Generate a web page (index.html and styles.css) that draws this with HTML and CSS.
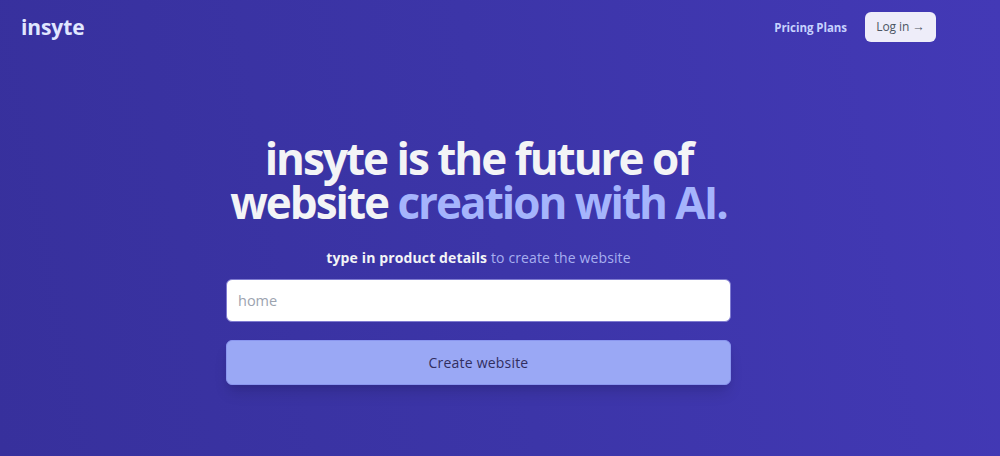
FILE: index.html
```html
<!DOCTYPE html>
<html lang="en">
<head>
<meta charset="utf-8">
<title>insyte</title>
<link rel="stylesheet" href="styles.css">
</head>
<body>
<div class="page">
  <header class="nav">
    <a class="logo" href="#">insyte</a>
    <div class="nav-right">
      <a class="nav-link" href="#">Pricing Plans</a>
      <a class="login" href="#">Log in <span class="arrow">→</span></a>
    </div>
  </header>
  <main class="hero">
    <h1 class="title">insyte is the future of<br>website <span class="accent">creation with AI.</span></h1>
    <p class="sub"><strong>type in product details</strong> to create the website</p>
    <form class="form">
      <input class="field" type="text" placeholder="home">
      <button class="cta" type="button">Create website</button>
    </form>
  </main>
</div>
</body>
</html>
```

FILE: styles.css
```css
* { box-sizing: border-box; }
html, body { margin: 0; height: 100%; }
body {
  font-family: "Open Sans", "Noto Sans", sans-serif;
  background: #3c35a8;
}
.page {
  height: 456px;
  overflow: hidden;
  background: linear-gradient(80deg, #37309c 0%, #3c35a8 50%, #4339b6 100%);
  display: flex;
  flex-direction: column;
}
.nav {
  display: flex;
  justify-content: space-between;
  align-items: center;
  padding: 12px 64px 0 21px;
  height: 42px;
}
.logo {
  color: #e0e7ff;
  font-size: 21px;
  font-weight: 700;
  letter-spacing: -0.1px;
  text-decoration: none;
  line-height: 30px;
}
.nav-right { display: flex; align-items: center; gap: 18px; }
.nav-link {
  color: #c7d2fe;
  font-size: 11.5px;
  font-weight: 700;
  letter-spacing: -0.05px;
  text-decoration: none;
}
.login {
  display: block;
  width: 71px;
  height: 30px;
  line-height: 30px;
  text-align: center;
  background: #eeedf9;
  border-radius: 6px;
  color: #4b5563;
  font-size: 12px;
  letter-spacing: -0.1px;
  text-decoration: none;
}
.arrow {
  font-family: "Liberation Sans", sans-serif;
  font-size: 12.5px;
}
.hero {
  display: flex;
  flex-direction: column;
  align-items: center;
  padding: 94px 43px 0 0;
}
.title {
  margin: 0;
  color: #f3f4f6;
  font-size: 44px;
  line-height: 44px;
  font-weight: 700;
  letter-spacing: -2px;
  text-align: center;
}
.accent { color: #a5b4fc; }
.sub {
  margin: 24px 0 0;
  color: #a7aff0;
  font-size: 14px;
  line-height: 20px;
  letter-spacing: 0.13px;
}
.sub strong { color: #f3f4f6; font-weight: 700; }
.form {
  width: 505px;
  margin-top: 11px;
  display: flex;
  flex-direction: column;
  gap: 18px;
}
.field {
  display: block;
  width: 100%;
  height: 43px;
  border: 1px solid #7f7bd0;
  border-radius: 6px;
  background: #fff;
  padding: 0 11px;
  font: inherit;
  font-size: 14.5px;
  outline: none;
}
.field::placeholder { color: #9ca3af; opacity: 1; }
.cta {
  display: block;
  width: 100%;
  height: 45px;
  border: 1px solid #8a96ef;
  border-radius: 6px;
  background: #9aa8f5;
  color: #312e5f;
  font: inherit;
  font-size: 14px;
  font-weight: 500;
  letter-spacing: 0.2px;
  box-shadow: 0 10px 15px -3px rgba(0,0,0,.13), 0 4px 6px -2px rgba(0,0,0,.06);
}
```
